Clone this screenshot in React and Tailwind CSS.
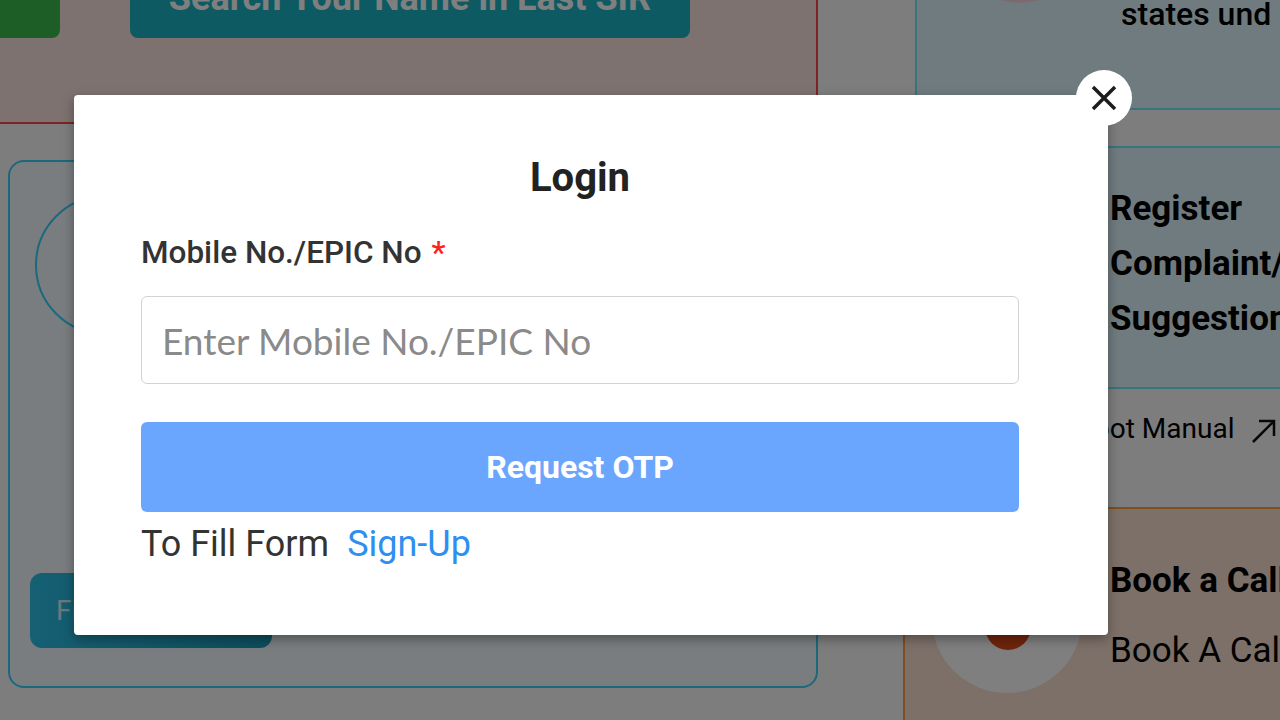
import React, { useState } from 'react';

const BackgroundPage = () => {
  return (
    <div className="-mt-[44px] flex">
      {/* left column */}
      <div className="w-[818px] shrink-0">
        <div className="flex h-[168px] items-end gap-[70px] border-b-2 border-r-2 border-[#ff4646] bg-[#fce4e0] pb-[84px]">
          <div className="-ml-4 h-[80px] w-[76px] rounded-lg bg-[#3aba4c]" />
          <div className="flex h-[80px] w-[560px] items-center justify-center whitespace-nowrap rounded-lg bg-[#1ab4c4] text-[36px] font-bold text-white">
            Search Your Name in Last SIR
          </div>
        </div>
        <div className="ml-2 mt-[36px] h-[528px] w-[810px] rounded-2xl border-2 border-[#34d2fa] bg-[#f2fbff]">
          <div className="ml-[25px] mt-[33px] h-[140px] w-[140px] rounded-full border-2 border-[#34d2fa]" />
          <button className="ml-[20px] mt-[238px] flex h-[75px] w-[242px] items-center rounded-xl bg-gradient-to-r from-[#2cc0e8] to-[#1a9cb8] pl-[26px] text-[28px] text-white/80">
            Fill Form
          </button>
        </div>
      </div>

      {/* right column */}
      <div className="ml-[85px] flex-1">
        <div className="ml-3 h-[154px] border-b-2 border-l-2 border-[#6ee8ff] bg-[#def6ff]">
          <div className="flex">
            <div className="-mt-[73px] ml-[43px] h-[120px] w-[120px] shrink-0 rounded-full bg-[#f6d6de]" />
            <div className="ml-[41px] mt-[38px] whitespace-nowrap text-[32px] font-medium leading-[40px] text-black">
              states und
            </div>
          </div>
        </div>
        <div className="ml-3 mt-[36px] h-[243px] border-y-2 border-l-2 border-[#6ee8ff] bg-[#def6ff] pl-[193px] pt-[33px]">
          <div className="whitespace-nowrap text-[35px] font-bold leading-[55px] text-black">
            <div>Register</div>
            <div>Complaint/</div>
            <div>Suggestion</div>
          </div>
        </div>
        <div className="flex h-[118px] items-start gap-[16px] pl-[133px] pt-[22px] text-[28px] leading-[36px] text-black">
          <span className="whitespace-nowrap">Chatbot Manual</span>
          <svg width="28" height="28" viewBox="0 0 28 28" className="mt-[6px] shrink-0">
            <path d="M3 25 L24 4 M9 4 H24 V19" stroke="#111" strokeWidth="2.5" fill="none" />
          </svg>
        </div>
        <div className="flex h-[260px] border-l-2 border-t-2 border-[#ff9f40] bg-[#fae0d2] pl-[27px]">
          <div className="relative mt-[34px] h-[150px] w-[150px] shrink-0 rounded-full bg-white">
            <div className="absolute left-[53px] top-[72px] h-[35px] w-[46px] rounded-b-full bg-[#e04818]" />
          </div>
          <div className="ml-[28px] mt-[51px] whitespace-nowrap text-[35px] leading-[42px] text-black">
            <div className="font-bold">Book a Call</div>
            <div className="mt-[28px]">Book A Call</div>
          </div>
        </div>
      </div>
    </div>
  );
};

const LoginModal = () => {
  const [value, setValue] = useState('');

  return (
    <div className="absolute left-[74px] top-[95px] h-[540px] w-[1034px] rounded bg-white pl-[67px] pr-[89px] pt-[59px] shadow-[0_4px_12px_rgba(0,0,0,0.35)]">
      <button className="absolute -right-[24px] -top-[25px] flex h-[56px] w-[56px] items-center justify-center rounded-full bg-white">
        <svg width="56" height="56" viewBox="0 0 56 56">
          <path d="M17 17 L39 39 M39 17 L17 39" stroke="#1c1c1c" strokeWidth="3.5" fill="none" />
        </svg>
      </button>

      <h2 className="text-center text-[40px] font-bold leading-[48px] text-[#222]">Login</h2>

      <label className="mt-[33px] block text-[31.5px] font-medium leading-[36px] text-[#333]">
        Mobile No./EPIC No <span className="ml-[2px] text-[#ff2020]">*</span>
      </label>

      <input
        type="text"
        value={value}
        onChange={(e) => setValue(e.target.value)}
        placeholder="Enter Mobile No./EPIC No"
        className="mt-[25px] block h-[88px] w-full rounded-md border-[1.5px] border-[#d2d2d2] px-[20px] font-['Lato',sans-serif] text-[37px] text-[#333] placeholder:text-[#8a8a8a] focus:outline-none"
      />

      <button className="mt-[38px] flex h-[90px] w-full items-center justify-center rounded-md bg-[#6ba6fe] text-[32px] font-bold text-white">
        Request OTP
      </button>

      <div className="mt-[11px] text-[36px] leading-[42px] text-[#333]">
        To Fill Form
        <span className="ml-[18px] cursor-pointer text-[#2e8ff0]">Sign-Up</span>
      </div>
    </div>
  );
};

export default function App() {
  return (
    <div className="relative h-[720px] w-[1280px] overflow-hidden bg-[#fafafa] font-['Roboto',sans-serif]">
      <BackgroundPage />
      <div className="absolute inset-0 bg-black/50" />
      <LoginModal />
    </div>
  );
}
